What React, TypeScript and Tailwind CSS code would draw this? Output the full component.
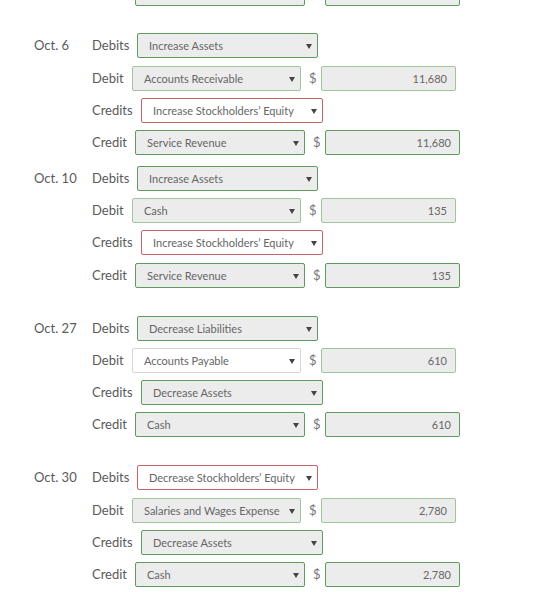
import React from "react";

type Tone = "dark" | "light" | "red" | "plain";

const toneClass: Record<Tone, string> = {
  dark: "border-[#5f9a5f] bg-[#ececec]",
  light: "border-[#9fc59c] bg-[#ececec]",
  red: "border-[#c86464] bg-white",
  plain: "border-[#d6d6d6] bg-white",
};

const labelWidth: Record<string, string> = {
  Debits: "w-[45px]",
  Debit: "w-[40px]",
  Credits: "w-[49px]",
  Credit: "w-[43px]",
};

const selectWidth: Record<string, string> = {
  Debits: "w-[181px]",
  Debit: "w-[169px]",
  Credits: "w-[182px]",
  Credit: "w-[170px]",
};

function Caret() {
  return (
    <svg width="6" height="5" viewBox="0 0 6 5" className="shrink-0">
      <path d="M0 0 H6 L3 5 Z" fill="#444" />
    </svg>
  );
}

function Select({ kind, text, tone }: { kind: string; text: string; tone: Tone }) {
  return (
    <div
      className={`${selectWidth[kind]} ${toneClass[tone]} flex h-[25px] items-center justify-between rounded-[2px] border pl-[11px] pr-[5px] pt-[1px] text-[11px] text-[#666]`}
    >
      <span>{text}</span>
      <Caret />
    </div>
  );
}

function Amount({ value, tone, showSign = true }: { value: string; tone: Tone; showSign?: boolean }) {
  return (
    <>
      <span className="ml-[8px] w-[12px] text-[13px] text-[#777]">{showSign ? "$" : ""}</span>
      <div
        className={`${toneClass[tone]} flex h-[25px] w-[135px] items-center justify-end rounded-[2px] border pr-[8px] pt-[1px] text-[11px] text-[#666]`}
      >
        {value}
      </div>
    </>
  );
}

type Row = { kind: string; text: string; tone: Tone; amount?: string; amountTone?: Tone };

function EntryRow({ row, hideLabel = false, className = "" }: { row: Row; hideLabel?: boolean; className?: string }) {
  return (
    <div className={`flex h-[25px] items-center ${className}`}>
      <span className={`${labelWidth[row.kind]} text-[13px] text-[#5a5a5a]`}>{hideLabel ? "" : row.kind}</span>
      <Select kind={row.kind} text={row.text} tone={row.tone} />
      {row.amount !== undefined && (
        <Amount value={row.amount} tone={row.amountTone ?? "dark"} showSign={!hideLabel} />
      )}
    </div>
  );
}

// spacing above rows 2–4 of an entry
type Gaps = [string, string, string];

function Entry({ date, rows, top, gaps }: { date: string; rows: Row[]; top: string; gaps: Gaps }) {
  return (
    <div className={`flex ${top}`}>
      <div className="flex h-[25px] w-[58px] items-center text-[13px] text-[#5a5a5a]">{date}</div>
      <div className="flex flex-col">
        {rows.map((r, i) => (
          <EntryRow key={i} row={r} className={i === 0 ? "" : gaps[i - 1]} />
        ))}
      </div>
    </div>
  );
}

export default function App() {
  return (
    <div
      className="h-[592px] w-[560px] overflow-hidden bg-white pl-[34px]"
      style={{ fontFamily: "Lato, 'Open Sans', sans-serif" }}
    >
      {/* tail of the previous entry, scrolled mostly out of view */}
      <div className="mt-[-19px] flex">
        <div className="w-[58px]" />
        <EntryRow hideLabel row={{ kind: "Credit", text: "", tone: "dark", amount: "", amountTone: "dark" }} />
      </div>

      <Entry
        top="mt-[27px]"
        gaps={["mt-[8px]", "mt-[7px]", "mt-[7px]"]}
        date="Oct. 6"
        rows={[
          { kind: "Debits", text: "Increase Assets", tone: "dark" },
          { kind: "Debit", text: "Accounts Receivable", tone: "light", amount: "11,680", amountTone: "light" },
          { kind: "Credits", text: "Increase Stockholders’ Equity", tone: "red" },
          { kind: "Credit", text: "Service Revenue", tone: "dark", amount: "11,680", amountTone: "dark" },
        ]}
      />

      <Entry
        top="mt-[11px]"
        gaps={["mt-[7px]", "mt-[7px]", "mt-[8px]"]}
        date="Oct. 10"
        rows={[
          { kind: "Debits", text: "Increase Assets", tone: "dark" },
          { kind: "Debit", text: "Cash", tone: "light", amount: "135", amountTone: "light" },
          { kind: "Credits", text: "Increase Stockholders’ Equity", tone: "red" },
          { kind: "Credit", text: "Service Revenue", tone: "dark", amount: "135", amountTone: "dark" },
        ]}
      />

      <Entry
        top="mt-[28px]"
        gaps={["mt-[7px]", "mt-[7px]", "mt-[7px]"]}
        date="Oct. 27"
        rows={[
          { kind: "Debits", text: "Decrease Liabilities", tone: "dark" },
          { kind: "Debit", text: "Accounts Payable", tone: "plain", amount: "610", amountTone: "light" },
          { kind: "Credits", text: "Decrease Assets", tone: "dark" },
          { kind: "Credit", text: "Cash", tone: "dark", amount: "610", amountTone: "dark" },
        ]}
      />

      <Entry
        top="mt-[28px]"
        gaps={["mt-[8px]", "mt-[7px]", "mt-[7px]"]}
        date="Oct. 30"
        rows={[
          { kind: "Debits", text: "Decrease Stockholders’ Equity", tone: "red" },
          { kind: "Debit", text: "Salaries and Wages Expense", tone: "light", amount: "2,780", amountTone: "light" },
          { kind: "Credits", text: "Decrease Assets", tone: "dark" },
          { kind: "Credit", text: "Cash", tone: "dark", amount: "2,780", amountTone: "dark" },
        ]}
      />
    </div>
  );
}
